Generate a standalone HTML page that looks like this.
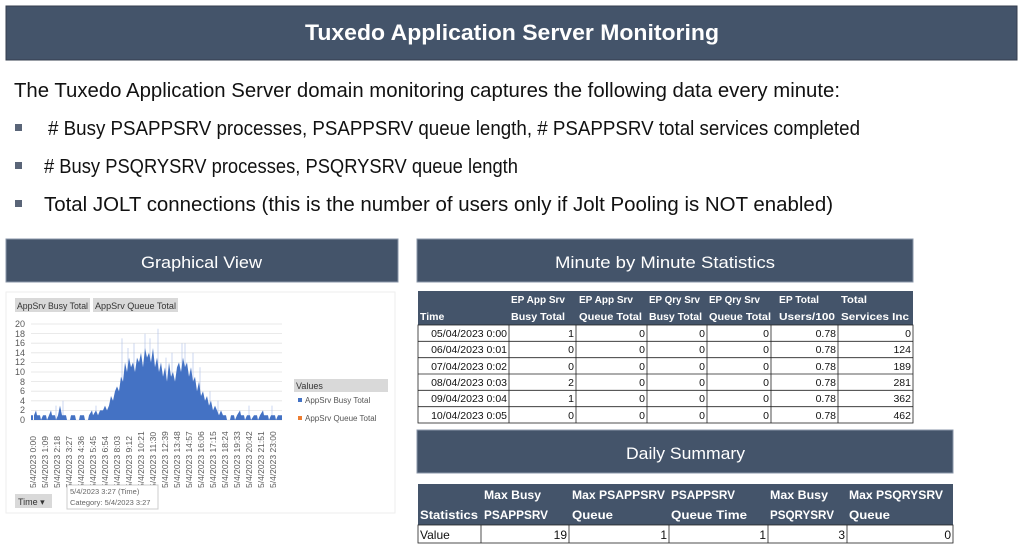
<!DOCTYPE html>
<html><head><meta charset="utf-8"><style>
html,body{margin:0;padding:0;background:#fff;width:1024px;height:548px;overflow:hidden}
svg{display:block}
text{font-family:"Liberation Sans",sans-serif}
</style></head><body>
<svg width="1024" height="548" viewBox="0 0 1024 548" xmlns="http://www.w3.org/2000/svg">
<!-- title bar -->
<rect x="6" y="6" width="1011" height="54" fill="#44546a" stroke="#333d4d" stroke-width="1"/>
<text x="305" y="40" font-size="22" font-weight="bold" fill="#fff" textLength="414" lengthAdjust="spacingAndGlyphs">Tuxedo Application Server Monitoring</text>
<!-- intro -->
<text x="14" y="97" font-size="20" fill="#111" textLength="826" lengthAdjust="spacingAndGlyphs">The Tuxedo Application Server domain monitoring captures the following data every minute:</text>
<rect x="15" y="124" width="7" height="7" fill="#5a6578"/>
<text x="48" y="135" font-size="20" fill="#111" textLength="812" lengthAdjust="spacingAndGlyphs"># Busy PSAPPSRV processes, PSAPPSRV queue length, # PSAPPSRV total services completed</text>
<rect x="15" y="162" width="7" height="7" fill="#5a6578"/>
<text x="44" y="173" font-size="20" fill="#111" textLength="474" lengthAdjust="spacingAndGlyphs"># Busy PSQRYSRV processes, PSQRYSRV queue length</text>
<rect x="15" y="200" width="7" height="7" fill="#5a6578"/>
<text x="44" y="211" font-size="20" fill="#111" textLength="789" lengthAdjust="spacingAndGlyphs">Total JOLT connections (this is the number of users only if Jolt Pooling is NOT enabled)</text>

<!-- section bars -->
<rect x="6" y="239" width="392" height="43" fill="#44546a" stroke="#8a96a8" stroke-width="1"/>
<text x="141" y="268" font-size="17" fill="#fff" textLength="121" lengthAdjust="spacingAndGlyphs">Graphical View</text>
<rect x="417" y="239" width="496" height="43" fill="#44546a" stroke="#8a96a8" stroke-width="1"/>
<text x="555" y="268" font-size="17" fill="#fff" textLength="220" lengthAdjust="spacingAndGlyphs">Minute by Minute Statistics</text>
<rect x="417" y="430" width="536" height="43" fill="#44546a" stroke="#8a96a8" stroke-width="1"/>
<text x="626" y="459" font-size="17" fill="#fff" textLength="119" lengthAdjust="spacingAndGlyphs">Daily Summary</text>

<!-- chart panel -->
<rect x="6" y="292" width="389" height="221" fill="#fff" stroke="#eeeeee"/>
<rect x="15" y="298" width="75" height="14" fill="#d9d9d9"/>
<text x="17" y="309" font-size="9" fill="#333" textLength="71" lengthAdjust="spacingAndGlyphs">AppSrv Busy Total</text>
<rect x="93" y="298" width="85" height="14" fill="#d9d9d9"/>
<text x="95" y="309" font-size="9" fill="#333" textLength="81" lengthAdjust="spacingAndGlyphs">AppSrv Queue Total</text>
<g stroke="#e3e3e3" stroke-width="0.8">
<line x1="31" x2="282" y1="324" y2="324"/><line x1="31" x2="282" y1="333.6" y2="333.6"/><line x1="31" x2="282" y1="343.2" y2="343.2"/><line x1="31" x2="282" y1="352.8" y2="352.8"/><line x1="31" x2="282" y1="362.4" y2="362.4"/><line x1="31" x2="282" y1="372" y2="372"/><line x1="31" x2="282" y1="381.6" y2="381.6"/><line x1="31" x2="282" y1="391.2" y2="391.2"/><line x1="31" x2="282" y1="400.8" y2="400.8"/><line x1="31" x2="282" y1="410.4" y2="410.4"/><line x1="31" x2="282" y1="420" y2="420"/>
</g>
<g font-size="9" fill="#595959" text-anchor="end">
<text x="25" y="327">20</text><text x="25" y="337">18</text><text x="25" y="346">16</text><text x="25" y="356">14</text><text x="25" y="365">12</text><text x="25" y="375">10</text><text x="25" y="385">8</text><text x="25" y="394">6</text><text x="25" y="404">4</text><text x="25" y="413">2</text><text x="25" y="423">0</text>
</g>
<g transform="translate(0,420) scale(1,-4.8)">
<g stroke="#a9bde6" stroke-width="0.6">
<line x1="56" x2="56" y1="0" y2="3"/><line x1="63" x2="63" y1="0" y2="4"/><line x1="96" x2="96" y1="0" y2="3"/><line x1="122" x2="122" y1="0" y2="17"/><line x1="128" x2="128" y1="0" y2="15"/><line x1="134" x2="134" y1="0" y2="16"/><line x1="145" x2="145" y1="0" y2="18"/><line x1="150" x2="150" y1="0" y2="17"/><line x1="158" x2="158" y1="0" y2="19"/><line x1="166" x2="166" y1="0" y2="13"/><line x1="172" x2="172" y1="0" y2="14"/><line x1="182" x2="182" y1="0" y2="16"/><line x1="185" x2="185" y1="0" y2="16"/><line x1="193" x2="193" y1="0" y2="14"/><line x1="200" x2="200" y1="0" y2="11"/><line x1="210" x2="210" y1="0" y2="6"/><line x1="218" x2="218" y1="0" y2="4"/><line x1="249" x2="249" y1="0" y2="3"/><line x1="272" x2="272" y1="0" y2="3"/>
</g>
<polygon fill="#4472c4" points="31,0 31,1 33,1 33,0 34,0 34,1 36,2 37,1 40,1 41,0 43,1 46,1 47,0 49,1 51,2 52,1 55,1 56,0 58,1 60,3 61,2 62,1 66,1 67,0 70,0 71,1 75,1 76,0 79,0 80,1 84,1 85,0 88,0 89,1 92,2 93,1 96,2 98,1 100,2 103,2 105,3 107,2 109,3 111,5 113,4 115,6 117,7 119,6 121,9 123,8 125,12 127,10 129,13 131,11 133,12 135,10 137,13 139,12 141,14 143,11 145,15 147,13 149,14 151,12 153,15 155,11 157,13 159,10 161,12 163,9 165,11 167,8 169,12 171,9 173,10 175,8 177,11 179,12 181,10 183,13 185,11 187,12 189,9 191,11 193,8 195,9 197,6 199,8 201,5 203,6 205,4 207,5 209,3 211,4 213,2 215,3 217,2 219,1 221,2 223,1 226,1 227,0 230,0 231,1 234,1 235,0 237,1 240,2 241,1 244,1 245,0 247,1 250,1 251,0 254,1 257,1 258,0 260,1 263,2 264,1 268,1 269,0 271,1 275,1 276,0 278,1 282,1 282,0"/>
</g>
<g font-size="8.5" fill="#595959">
<text transform="translate(36,488) rotate(-90)">5/4/2023 0:00</text>
<text transform="translate(48,488) rotate(-90)">5/4/2023 1:09</text>
<text transform="translate(60,488) rotate(-90)">5/4/2023 2:18</text>
<text transform="translate(72,488) rotate(-90)">5/4/2023 3:27</text>
<text transform="translate(84,488) rotate(-90)">5/4/2023 4:36</text>
<text transform="translate(96,488) rotate(-90)">5/4/2023 5:45</text>
<text transform="translate(108,488) rotate(-90)">5/4/2023 6:54</text>
<text transform="translate(120,488) rotate(-90)">5/4/2023 8:03</text>
<text transform="translate(132,488) rotate(-90)">5/4/2023 9:12</text>
<text transform="translate(144,488) rotate(-90)">5/4/2023 10:21</text>
<text transform="translate(156,488) rotate(-90)">5/4/2023 11:30</text>
<text transform="translate(168,488) rotate(-90)">5/4/2023 12:39</text>
<text transform="translate(180,488) rotate(-90)">5/4/2023 13:48</text>
<text transform="translate(192,488) rotate(-90)">5/4/2023 14:57</text>
<text transform="translate(204,488) rotate(-90)">5/4/2023 16:06</text>
<text transform="translate(216,488) rotate(-90)">5/4/2023 17:15</text>
<text transform="translate(228,488) rotate(-90)">5/4/2023 18:24</text>
<text transform="translate(240,488) rotate(-90)">5/4/2023 19:33</text>
<text transform="translate(252,488) rotate(-90)">5/4/2023 20:42</text>
<text transform="translate(264,488) rotate(-90)">5/4/2023 21:51</text>
<text transform="translate(276,488) rotate(-90)">5/4/2023 23:00</text>
</g>
<rect x="294" y="379" width="94" height="13" fill="#d9d9d9"/>
<text x="296" y="389" font-size="9" fill="#333">Values</text>
<rect x="298" y="398" width="4" height="4" fill="#4472c4"/>
<text x="305" y="403" font-size="8" fill="#555">AppSrv Busy Total</text>
<rect x="298" y="416" width="4" height="4" fill="#ed7d31"/>
<text x="305" y="421" font-size="8" fill="#555">AppSrv Queue Total</text>
<rect x="67" y="485" width="91" height="24" fill="#fff" stroke="#ccc"/>
<text x="70" y="494" font-size="7.5" fill="#666">5/4/2023 3:27 (Time)</text>
<text x="70" y="505" font-size="7.5" fill="#666">Category: 5/4/2023 3:27</text>
<rect x="15" y="494" width="37" height="14" fill="#d9d9d9"/>
<text x="18" y="505" font-size="9" fill="#333">Time ▾</text>

<!-- table 1 -->
<rect x="418" y="291" width="495" height="34" fill="#44546a"/>
<g font-size="10.5" font-weight="bold" fill="#fff">
<text x="420" y="320">Time</text>
<text x="511" y="303" textLength="54" lengthAdjust="spacingAndGlyphs">EP App Srv</text><text x="511" y="320" textLength="54" lengthAdjust="spacingAndGlyphs">Busy Total</text>
<text x="579" y="303" textLength="54" lengthAdjust="spacingAndGlyphs">EP App Srv</text><text x="579" y="320" textLength="63" lengthAdjust="spacingAndGlyphs">Queue Total</text>
<text x="649" y="303" textLength="51" lengthAdjust="spacingAndGlyphs">EP Qry Srv</text><text x="649" y="320" textLength="53" lengthAdjust="spacingAndGlyphs">Busy Total</text>
<text x="709" y="303" textLength="51" lengthAdjust="spacingAndGlyphs">EP Qry Srv</text><text x="709" y="320" textLength="62" lengthAdjust="spacingAndGlyphs">Queue Total</text>
<text x="779" y="303" textLength="40" lengthAdjust="spacingAndGlyphs">EP Total</text><text x="779" y="320" textLength="56" lengthAdjust="spacingAndGlyphs">Users/100</text>
<text x="841" y="303" textLength="26" lengthAdjust="spacingAndGlyphs">Total</text><text x="841" y="320" textLength="68" lengthAdjust="spacingAndGlyphs">Services Inc</text>
</g>
<g stroke="#222" stroke-width="0.8" fill="none">
<rect x="418" y="325" width="495" height="98"/>
<line x1="418" x2="913" y1="341.3" y2="341.3"/><line x1="418" x2="913" y1="357.7" y2="357.7"/><line x1="418" x2="913" y1="374" y2="374"/><line x1="418" x2="913" y1="390.3" y2="390.3"/><line x1="418" x2="913" y1="406.7" y2="406.7"/>
<line x1="509" x2="509" y1="325" y2="423"/><line x1="576" x2="576" y1="325" y2="423"/><line x1="647" x2="647" y1="325" y2="423"/><line x1="707" x2="707" y1="325" y2="423"/><line x1="771" x2="771" y1="325" y2="423"/><line x1="838" x2="838" y1="325" y2="423"/>
</g>
<g font-size="10.5" fill="#111" text-anchor="end">
<text x="507" y="337">05/04/2023 0:00</text><text x="574" y="337">1</text><text x="645" y="337">0</text><text x="705" y="337">0</text><text x="769" y="337">0</text><text x="836" y="337">0.78</text><text x="911" y="337">0</text>
<text x="507" y="353">06/04/2023 0:01</text><text x="574" y="353">0</text><text x="645" y="353">0</text><text x="705" y="353">0</text><text x="769" y="353">0</text><text x="836" y="353">0.78</text><text x="911" y="353">124</text>
<text x="507" y="370">07/04/2023 0:02</text><text x="574" y="370">0</text><text x="645" y="370">0</text><text x="705" y="370">0</text><text x="769" y="370">0</text><text x="836" y="370">0.78</text><text x="911" y="370">189</text>
<text x="507" y="386">08/04/2023 0:03</text><text x="574" y="386">2</text><text x="645" y="386">0</text><text x="705" y="386">0</text><text x="769" y="386">0</text><text x="836" y="386">0.78</text><text x="911" y="386">281</text>
<text x="507" y="402">09/04/2023 0:04</text><text x="574" y="402">1</text><text x="645" y="402">0</text><text x="705" y="402">0</text><text x="769" y="402">0</text><text x="836" y="402">0.78</text><text x="911" y="402">362</text>
<text x="507" y="419">10/04/2023 0:05</text><text x="574" y="419">0</text><text x="645" y="419">0</text><text x="705" y="419">0</text><text x="769" y="419">0</text><text x="836" y="419">0.78</text><text x="911" y="419">462</text>
</g>

<!-- daily table -->
<rect x="418" y="484" width="535" height="41" fill="#44546a"/>
<g font-size="12" font-weight="bold" fill="#fff">
<text x="420" y="519" textLength="58" lengthAdjust="spacingAndGlyphs">Statistics</text>
<text x="484" y="499" textLength="57" lengthAdjust="spacingAndGlyphs">Max Busy</text><text x="484" y="519" textLength="64" lengthAdjust="spacingAndGlyphs">PSAPPSRV</text>
<text x="572" y="499" textLength="93" lengthAdjust="spacingAndGlyphs">Max PSAPPSRV</text><text x="572" y="519" textLength="41" lengthAdjust="spacingAndGlyphs">Queue</text>
<text x="671" y="499" textLength="64" lengthAdjust="spacingAndGlyphs">PSAPPSRV</text><text x="671" y="519" textLength="76" lengthAdjust="spacingAndGlyphs">Queue Time</text>
<text x="770" y="499" textLength="58" lengthAdjust="spacingAndGlyphs">Max Busy</text><text x="770" y="519" textLength="64" lengthAdjust="spacingAndGlyphs">PSQRYSRV</text>
<text x="849" y="499" textLength="94" lengthAdjust="spacingAndGlyphs">Max PSQRYSRV</text><text x="849" y="519" textLength="41" lengthAdjust="spacingAndGlyphs">Queue</text>
</g>
<g stroke="#222" stroke-width="0.8" fill="none">
<rect x="418" y="525" width="535" height="18"/>
<line x1="481" x2="481" y1="525" y2="543"/><line x1="569" x2="569" y1="525" y2="543"/><line x1="669" x2="669" y1="525" y2="543"/><line x1="768" x2="768" y1="525" y2="543"/><line x1="847" x2="847" y1="525" y2="543"/>
</g>
<g font-size="12" fill="#111">
<text x="420" y="539">Value</text>
<g text-anchor="end"><text x="567" y="539">19</text><text x="667" y="539">1</text><text x="766" y="539">1</text><text x="845" y="539">3</text><text x="951" y="539">0</text></g>
</g>
</svg>
</body></html>
